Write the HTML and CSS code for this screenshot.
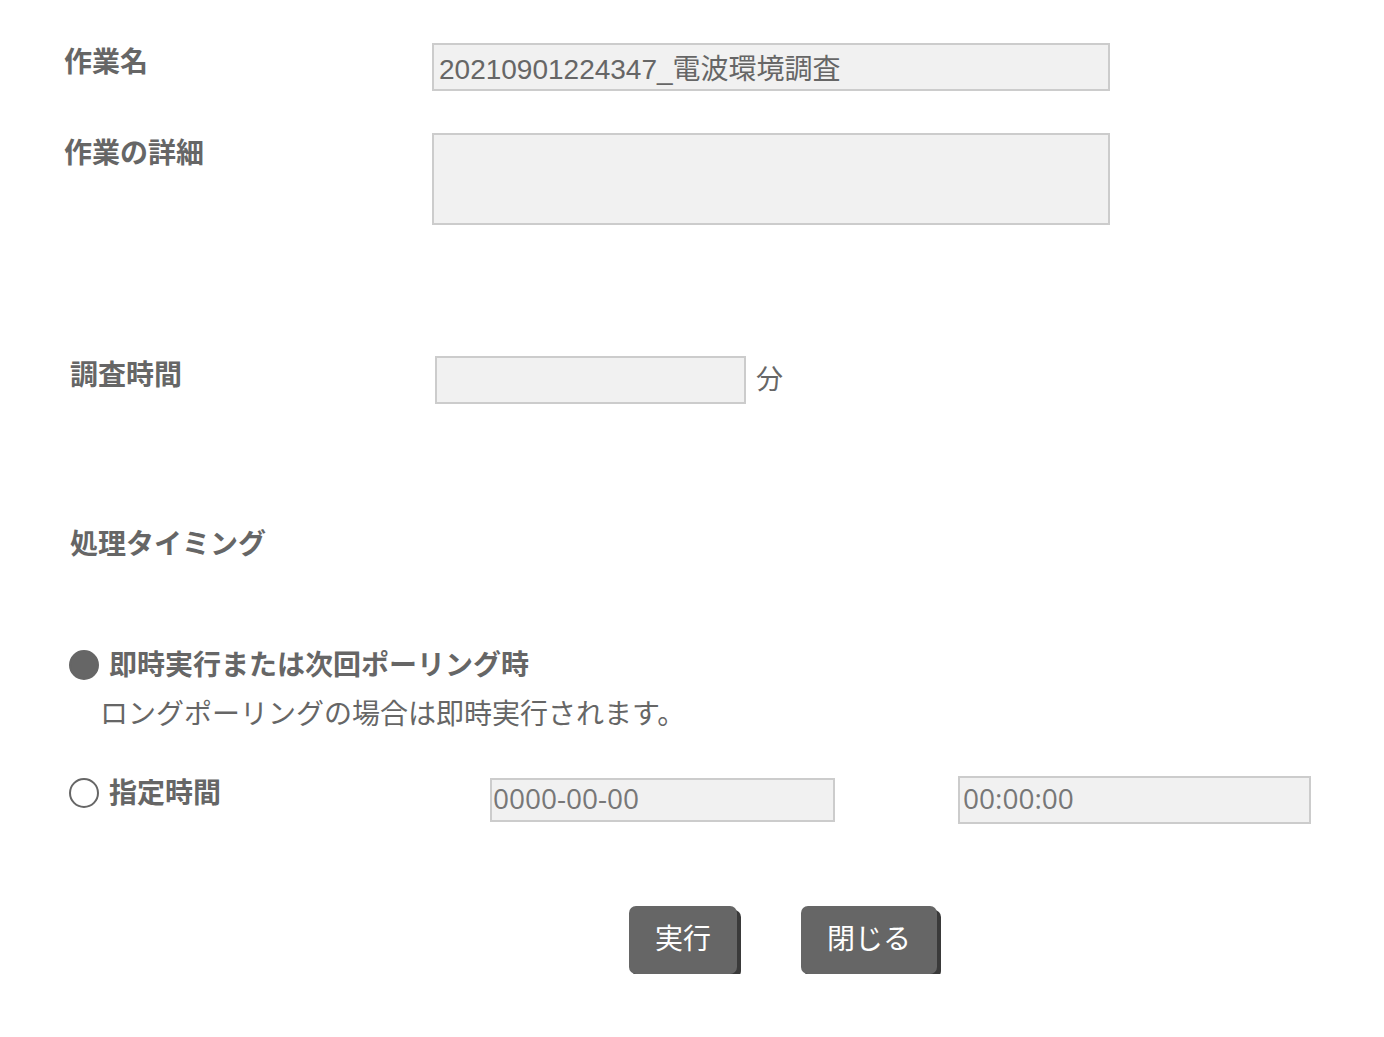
FILE: index.html
```html
<!DOCTYPE html>
<html lang="ja">
<head>
<meta charset="utf-8">
<title>作業</title>
<link rel="stylesheet" href="styles.css">
</head>
<body>
<main class="form">
  <section class="basic">
    <div class="row row-name">
      <div class="label">作業名</div>
      <input class="text name-input" type="text" value="20210901224347_電波環境調査">
    </div>
    <div class="row row-detail">
      <div class="label">作業の詳細</div>
      <textarea class="text detail-input"></textarea>
    </div>
  </section>

  <section class="duration">
    <div class="row row-time">
      <div class="label">調査時間</div>
      <div class="field">
        <input class="text minutes-input" type="text">
        <span class="unit">分</span>
      </div>
    </div>
  </section>

  <section class="timing">
    <div class="heading">処理タイミング</div>
    <div class="radio-line radio-now">
      <span class="radio checked"></span>
      <span class="radio-label">即時実行または次回ポーリング時</span>
    </div>
    <div class="note">ロングポーリングの場合は即時実行されます。</div>
    <div class="radio-line radio-at">
      <div class="radio-head">
        <span class="radio"></span>
        <span class="radio-label">指定時間</span>
      </div>
      <input class="text date-input" type="text" placeholder="0000-00-00">
      <input class="text clock-input" type="text" placeholder="00:00:00">
    </div>
  </section>

  <div class="actions">
    <button class="btn" type="button">実行</button>
    <button class="btn" type="button">閉じる</button>
  </div>
</main>
</body>
</html>
```

FILE: styles.css
```css
html, body {
  margin: 0;
  padding: 0;
  background: #ffffff;
}

body {
  font-family: "Liberation Sans", "Noto Sans CJK JP", sans-serif;
  color: #666666;
  font-size: 28px;
}

.form {
  width: 1384px;
}

.label,
.heading,
.radio-label {
  font-family: "Noto Sans CJK JP", sans-serif;
  font-weight: 700;
  font-size: 28px;
  line-height: 40px;
  color: #666666;
}

.text {
  box-sizing: border-box;
  border: 2px solid #cccccc;
  background: #f1f1f1;
  color: #666666;
  font-family: "Liberation Sans", "Noto Sans CJK JP", sans-serif;
  font-size: 28px;
  padding: 0 5px;
  margin: 0;
  outline: none;
  border-radius: 0;
}

.text::placeholder {
  color: #777777;
  font-family: "Open Sans", "Noto Sans CJK JP", sans-serif;
  opacity: 1;
}

/* basic section */
.basic {
  padding: 40px 0 0 64px;
}

.row {
  display: grid;
  align-items: start;
}

.basic .row {
  grid-template-columns: 368px 678px;
}

.row-detail {
  margin-top: 40px;
}

.name-input {
  margin-top: 3px;
  height: 48px;
  width: 678px;
}

.detail-input {
  display: block;
  margin-top: 2px;
  height: 92px;
  width: 678px;
  resize: none;
}

/* duration */
.duration {
  padding: 128px 0 0 70px;
}

.duration .row {
  grid-template-columns: 365px auto;
}

.field {
  display: flex;
  align-items: center;
  margin-top: 3px;
  gap: 10px;
}

.minutes-input {
  width: 311px;
  height: 48px;
}

.unit {
  font-family: "Noto Sans CJK JP", sans-serif;
  font-size: 27px;
  line-height: 40px;
  margin-top: -4px;
}

/* timing */
.timing {
  padding: 118px 0 0 69px;
}

.heading {
  padding-left: 1px;
}

.radio-line {
  display: flex;
  align-items: center;
}

.radio-now {
  margin-top: 81px;
  gap: 10px;
}

.radio {
  box-sizing: border-box;
  display: inline-block;
  width: 30px;
  height: 30px;
  border-radius: 50%;
  border: 2px solid #666666;
  background: #ffffff;
  flex: none;
}

.radio.checked {
  background: #666666;
}

.radio-now .radio {
  margin-top: 4px;
}

.note {
  font-family: "Noto Sans CJK JP", sans-serif;
  font-size: 28px;
  line-height: 40px;
  margin-top: 9px;
  padding-left: 31px;
  color: #666666;
}

.radio-at {
  margin-top: 39px;
  display: grid;
  grid-template-columns: 421px 468px 353px;
  align-items: start;
}

.radio-head {
  display: flex;
  align-items: center;
  gap: 10px;
}

.radio-head .radio {
  margin-top: 4px;
}

.date-input {
  margin-top: 7px;
  width: 345px;
  height: 44px;
  padding-left: 1px;
}

.clock-input {
  margin-top: 5px;
  width: 353px;
  height: 48px;
  padding-left: 3px;
}

/* actions */
.actions {
  display: flex;
  gap: 64px;
  padding-left: 629px;
  margin-top: 82px;
}

.btn {
  box-sizing: border-box;
  font-family: "Noto Sans CJK JP", sans-serif;
  font-size: 28px;
  line-height: 40px;
  color: #ffffff;
  background: #666666;
  border: none;
  border-radius: 7px;
  padding: 11px 26px 17px;
  margin: 0;
  height: 68px;
  box-shadow: 4px 4px 0 #3a3a3a;
  cursor: pointer;
}
```
